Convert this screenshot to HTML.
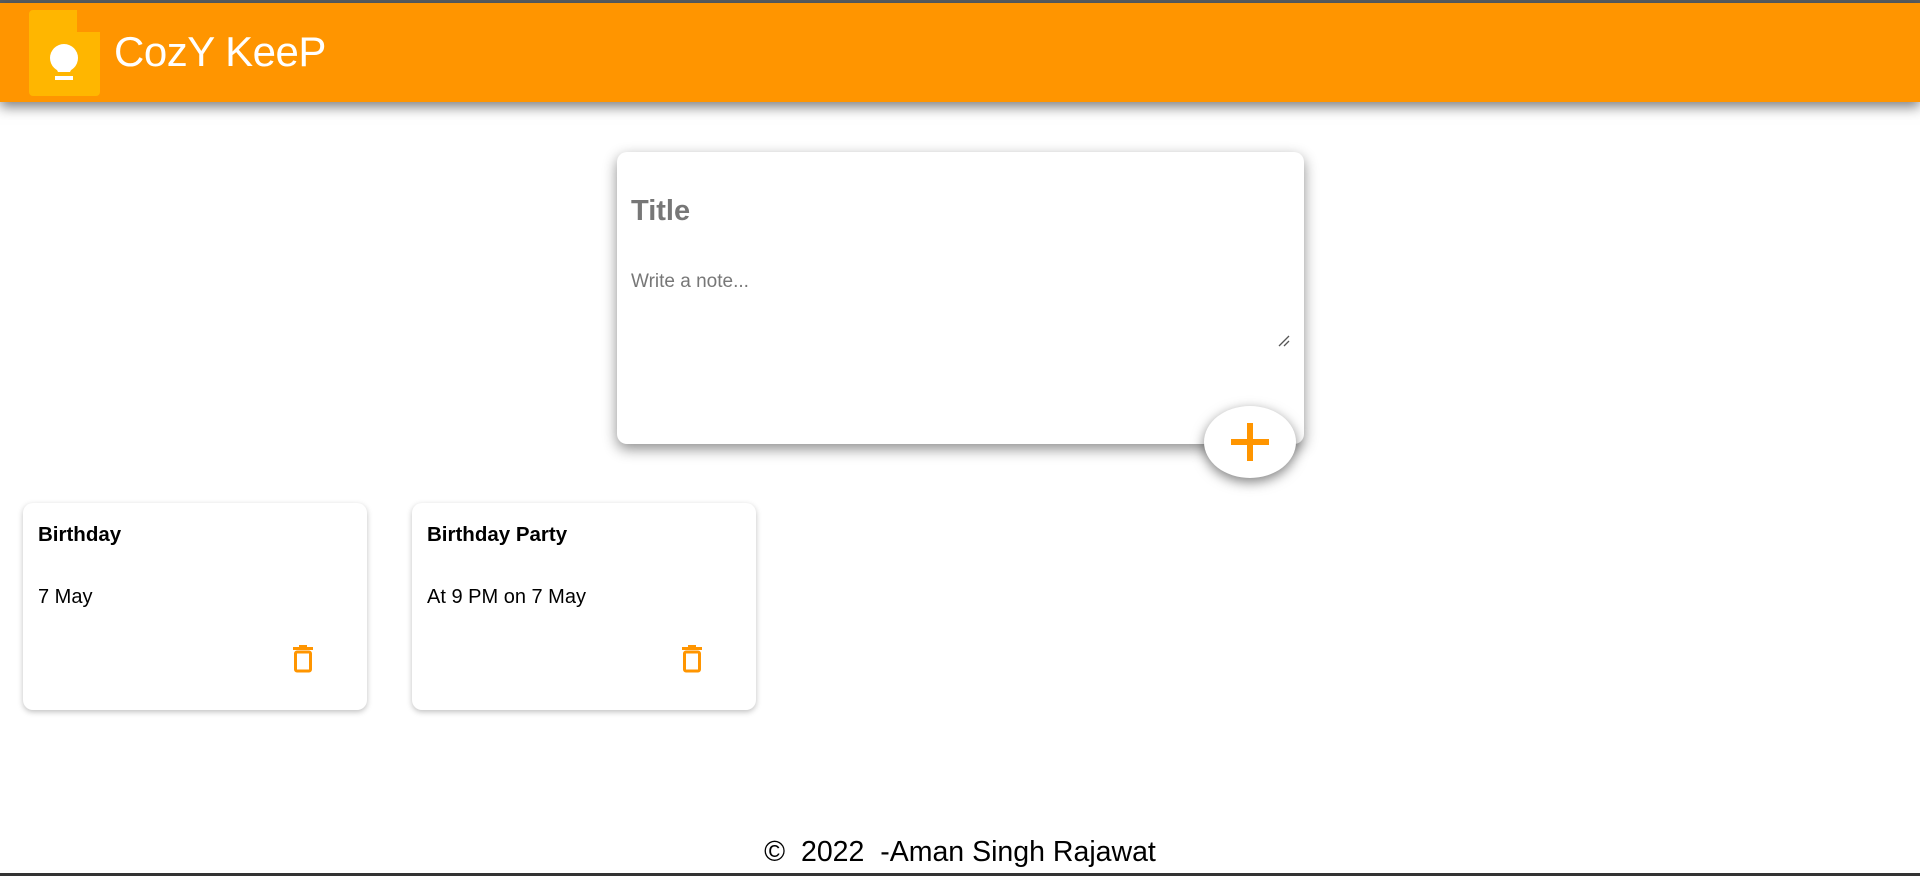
<!DOCTYPE html>
<html><head><meta charset="utf-8"><style>
*{box-sizing:border-box;margin:0;padding:0}
body{width:1920px;height:876px;overflow:hidden;background:#fff;font-family:"Liberation Sans",Arial,sans-serif;position:relative}
.top{position:absolute;left:0;top:0;width:1920px;height:3px;background:#5a5f63}
header{position:absolute;left:0;top:3px;width:1920px;height:99px;background:#ff9500;box-shadow:0 5px 12px rgba(0,0,0,.5)}
.logo{position:absolute;left:29px;top:7px;width:71px;height:86px}
.brand{position:absolute;left:114px;top:25px;font-size:42px;color:#fff;letter-spacing:-0.5px}
.form{position:absolute;left:617px;top:152px;width:687px;height:292px;background:#fff;border-radius:10px;box-shadow:0 5px 14px rgba(0,0,0,.45)}
.form .t{position:absolute;left:14px;top:43px;font-size:29px;font-weight:bold;color:#777}
.form .w{position:absolute;left:14px;top:119px;font-size:19px;color:#777}
.rs{position:absolute;left:660px;top:182px}
.fab{position:absolute;left:1204px;top:406px;width:92px;height:72px;border-radius:50%;background:#fff;box-shadow:0 4px 12px rgba(0,0,0,.5)}
.fab:before{content:"";position:absolute;left:27px;top:33px;width:38px;height:6px;background:#ff9500}
.fab:after{content:"";position:absolute;left:43px;top:17px;width:6px;height:38px;background:#ff9500}
.note{position:absolute;top:503px;width:344px;height:207px;background:#fff;border-radius:10px;box-shadow:0 2px 6px rgba(0,0,0,.25)}
.note h1{position:absolute;left:15px;top:20px;font-size:20.5px;font-weight:bold;color:#000}
.note p{position:absolute;left:15px;top:83px;font-size:20px;color:#000}
.note svg{position:absolute;left:269px;top:142px}
footer{position:absolute;left:0;top:836px;width:1920px;text-align:center;font-size:28.5px;color:#000}
.bot{position:absolute;left:0;top:873px;width:1920px;height:3px;background:#333}
</style></head><body>
<div class="top"></div>
<header>
<svg class="logo" viewBox="0 0 71 86"><path d="M4 0H48V22H71V82a4 4 0 0 1-4 4H4a4 4 0 0 1-4-4V4a4 4 0 0 1 4-4z" fill="#ffb600"/><circle cx="35" cy="48" r="14" fill="#fff"/><path d="M26 56h18l-3 6h-12z" fill="#fff"/><rect x="26" y="66" width="18" height="4" fill="#fff"/></svg>
<div class="brand">CozY KeeP</div>
</header>
<div class="form"><div class="t">Title</div><div class="w">Write a note...</div>
<svg class="rs" width="14" height="14"><path d="M2 12L12 2M7 12L12 7" stroke="#555" stroke-width="1.3"/></svg></div>
<div class="fab"></div>
<div class="note" style="left:23px"><h1>Birthday</h1><p>7 May</p>
<svg width="24" height="28" viewBox="0 0 24 28"><rect x="7" y="0" width="8" height="3" fill="#ff9500"/><rect x="1" y="2" width="20" height="3" fill="#ff9500"/><rect x="3.5" y="7" width="15" height="19" rx="1.5" fill="none" stroke="#ff9500" stroke-width="3"/></svg></div>
<div class="note" style="left:412px"><h1>Birthday Party</h1><p>At 9 PM on 7 May</p>
<svg width="24" height="28" viewBox="0 0 24 28"><rect x="7" y="0" width="8" height="3" fill="#ff9500"/><rect x="1" y="2" width="20" height="3" fill="#ff9500"/><rect x="3.5" y="7" width="15" height="19" rx="1.5" fill="none" stroke="#ff9500" stroke-width="3"/></svg></div>
<footer>©&nbsp; 2022&nbsp; -Aman Singh Rajawat</footer>
<div class="bot"></div>
</body></html>
